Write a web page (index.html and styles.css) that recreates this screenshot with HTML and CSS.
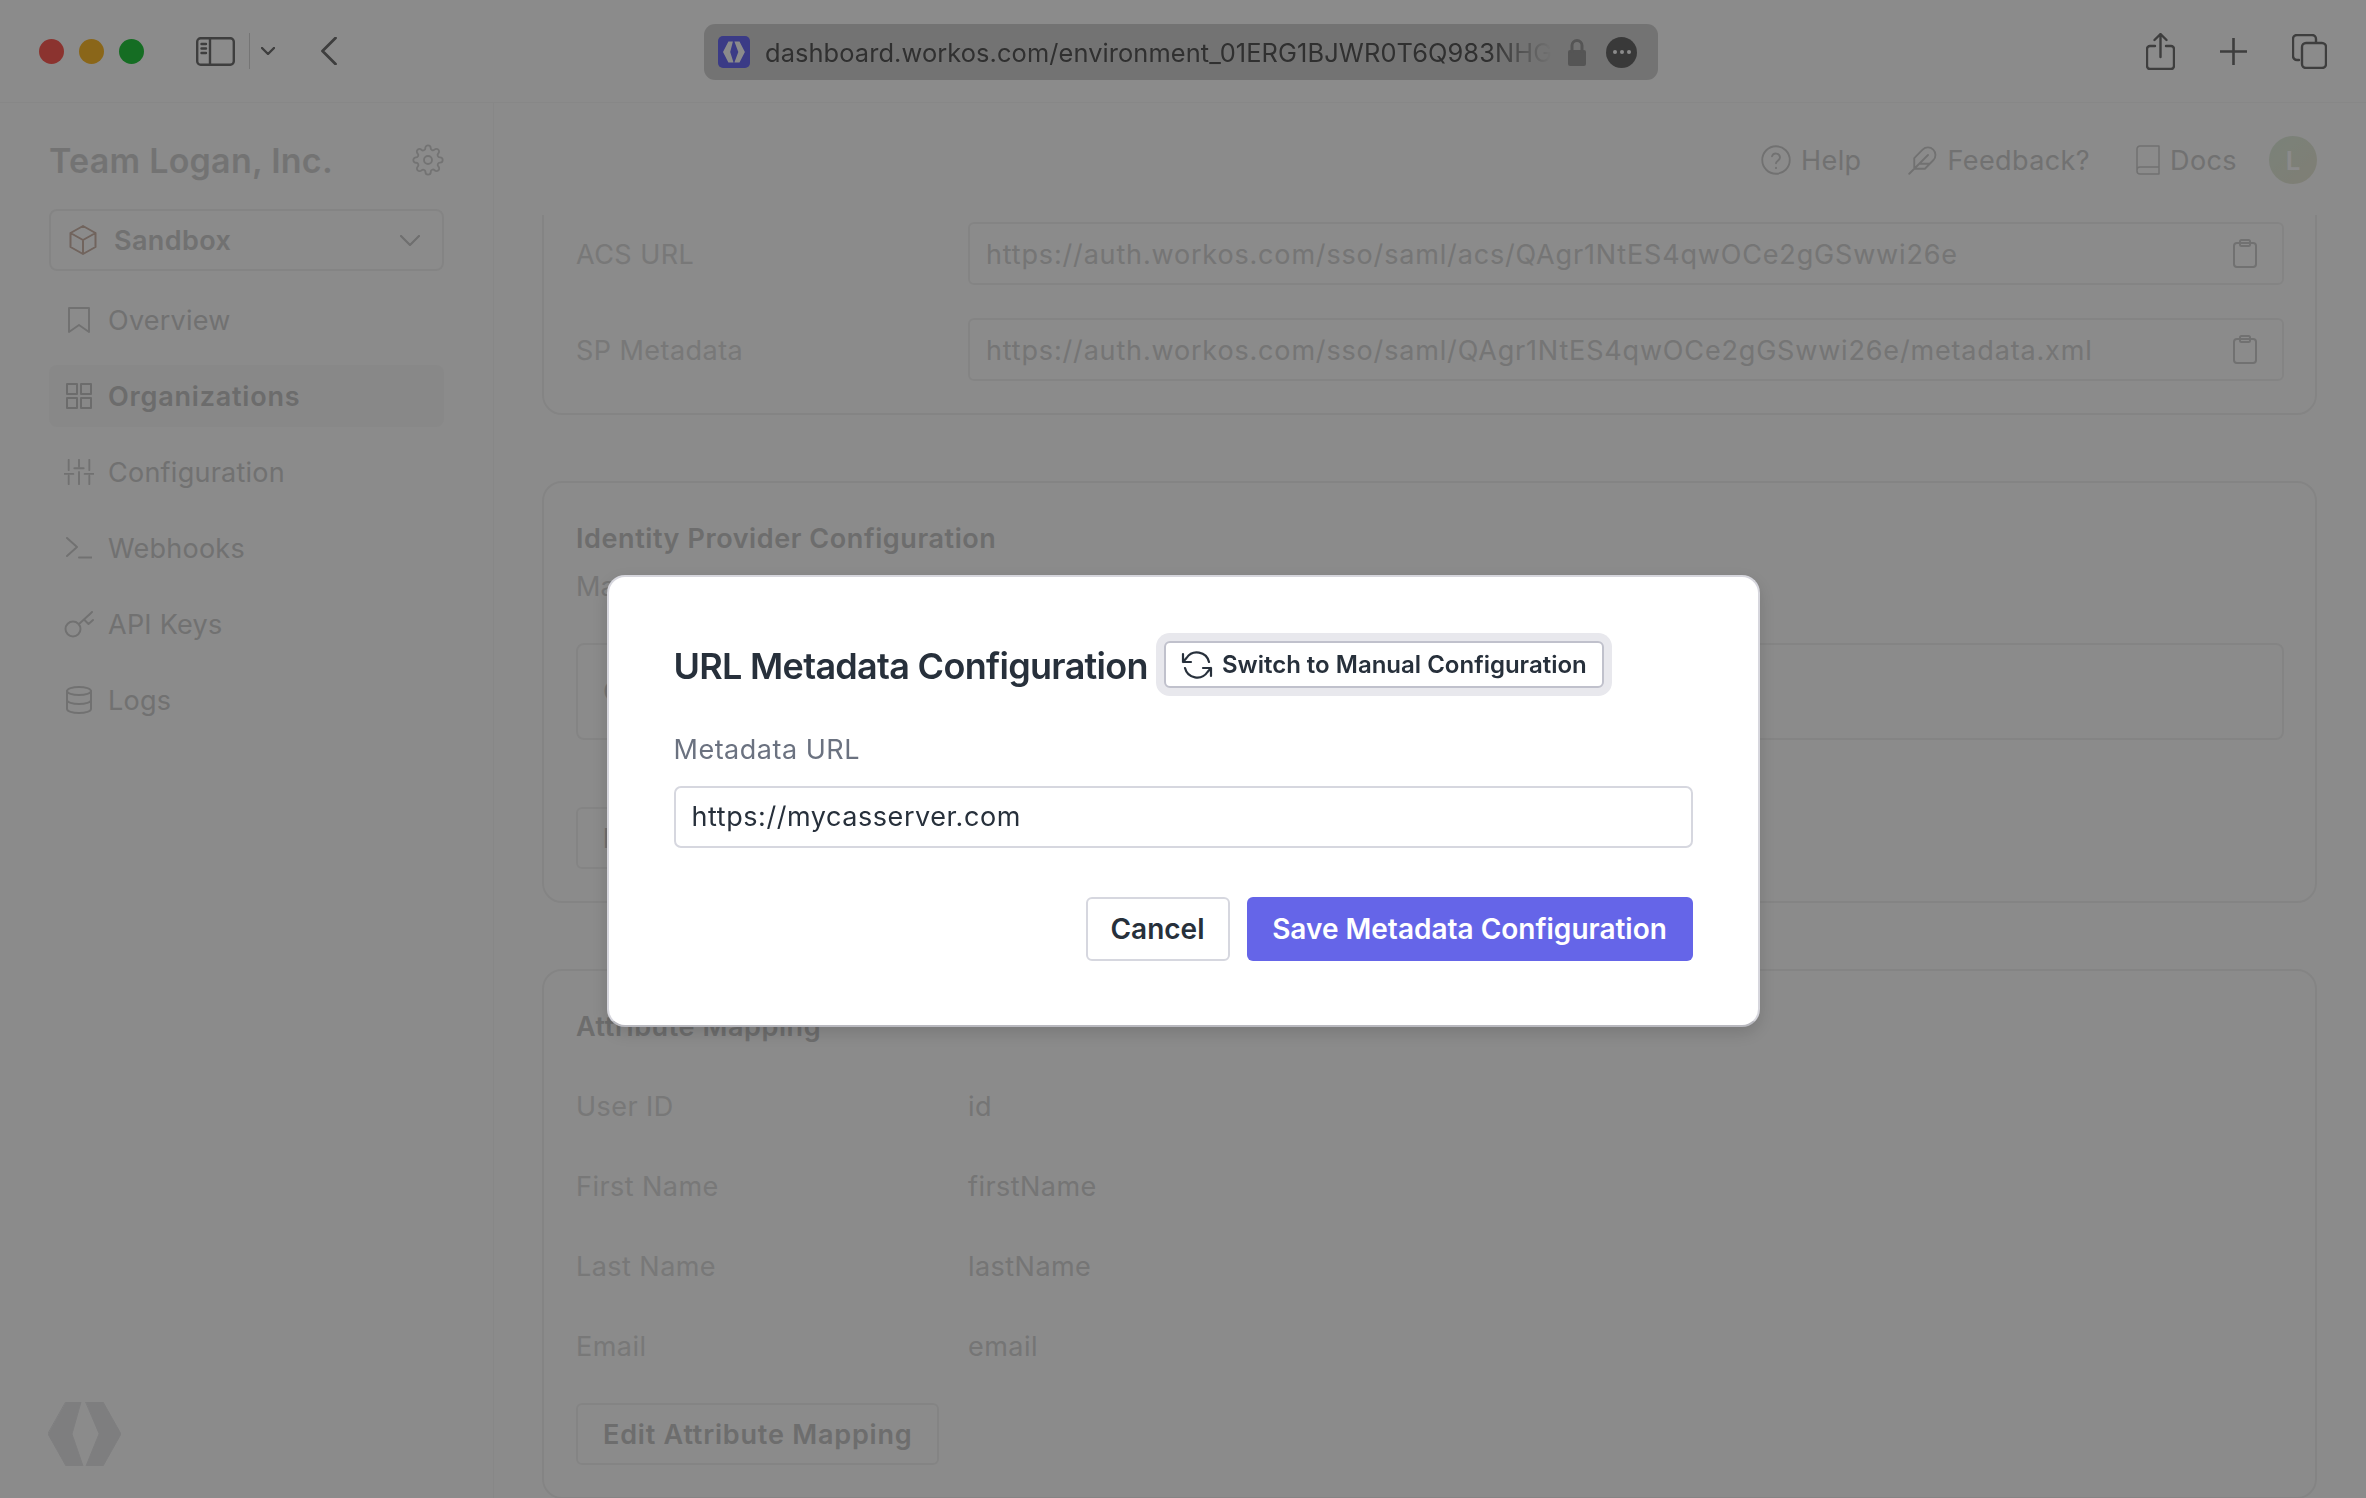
FILE: index.html
```html
<!DOCTYPE html>
<html lang="en">
<head>
    <meta charset="UTF-8">
    <meta name="viewport" content="width=device-width, initial-scale=1.0">
    <title>WorkOS Dashboard</title>
    <link rel="stylesheet" href="styles.css">
</head>
<body>
    <div class="window">
        <!-- Browser toolbar -->
        <header class="toolbar">
            <div class="toolbar-left">
                <div class="lights">
                    <span class="light light-red"></span>
                    <span class="light light-yellow"></span>
                    <span class="light light-green"></span>
                </div>
                <svg class="tb-sidebar" viewBox="0 0 39 29"><rect x="1.2" y="1.2" width="36.6" height="26.6" rx="3.5"/><path d="M14 1.2v26.6M5.5 7h4.5M5.5 11.5h4.5M5.5 16h4.5"/></svg>
                <span class="tb-divider"></span>
                <svg class="tb-caret" viewBox="0 0 14 8"><path d="M1 1l6 6 6-6"/></svg>
                <svg class="tb-back" viewBox="0 0 16 28"><path d="M14.5 1L1.5 14l13 13"/></svg>
            </div>
            <div class="urlbar">
                <svg class="favicon" viewBox="0 0 32 32">
                    <rect width="32" height="32" rx="5" class="favicon-bg"/>
                    <path class="favicon-mark" transform="translate(5 5.500) scale(0.3 0.33)" d="M18 0h15l-9 32 11 32H18L0 32zM38 0h17l18 32-18 32H38l13-32z"/>
                </svg>
                <span class="url-text">dashboard.workos.com/environment_01ERG1BJWR0T6Q983NHG</span>
                <svg class="url-lock" viewBox="0 0 18 27"><path class="lock-body" d="M2 11h14a2 2 0 0 1 2 2v12a2 2 0 0 1-2 2H2a2 2 0 0 1-2-2V13a2 2 0 0 1 2-2z"/><path class="lock-loop" d="M4 12V6.500a5 5 0 0 1 10 0V12"/></svg>
                <span class="url-more"><i></i><i></i><i></i></span>
            </div>
            <div class="toolbar-right">
                <svg class="tb-share" viewBox="0 0 29 37"><path d="M9 13H4a3 3 0 0 0-3 3v17a3 3 0 0 0 3 3h21a3 3 0 0 0 3-3V16a3 3 0 0 0-3-3h-5M14.500 24V1.500M8.500 7l6-6 6 6"/></svg>
                <svg class="tb-plus" viewBox="0 0 27 27"><path d="M13.500 0v27M0 13.500h27"/></svg>
                <svg class="tb-tabs" viewBox="0 0 35 35"><path d="M7 26H5a4 4 0 0 1-4-4V5a4 4 0 0 1 4-4h15a4 4 0 0 1 4 4v3"/><rect x="10" y="9" width="24" height="25" rx="4"/></svg>
            </div>
        </header>

        <div class="app">
            <!-- Sidebar -->
            <aside class="sidebar">
                <div class="brand">
                    <span class="brand-name">Team Logan, Inc.</span>
                    <svg class="brand-gear" viewBox="0 0 24 24"><circle cx="12" cy="12" r="3"/><path d="M19.4 15a1.65 1.65 0 0 0 .33 1.82l.06.06a2 2 0 0 1 0 2.83 2 2 0 0 1-2.83 0l-.06-.06a1.65 1.65 0 0 0-1.82-.33 1.65 1.65 0 0 0-1 1.51V21a2 2 0 0 1-2 2 2 2 0 0 1-2-2v-.09A1.65 1.65 0 0 0 9 19.4a1.65 1.65 0 0 0-1.82.33l-.06.06a2 2 0 0 1-2.83 0 2 2 0 0 1 0-2.83l.06-.06a1.65 1.65 0 0 0 .33-1.82 1.65 1.65 0 0 0-1.51-1H3a2 2 0 0 1-2-2 2 2 0 0 1 2-2h.09A1.65 1.65 0 0 0 4.600 9a1.65 1.65 0 0 0-.33-1.82l-.06-.06a2 2 0 0 1 0-2.83 2 2 0 0 1 2.83 0l.06.06a1.65 1.65 0 0 0 1.82.33H9a1.65 1.65 0 0 0 1-1.51V3a2 2 0 0 1 2-2 2 2 0 0 1 2 2v.09a1.65 1.65 0 0 0 1 1.51 1.65 1.65 0 0 0 1.82-.33l.06-.06a2 2 0 0 1 2.83 0 2 2 0 0 1 0 2.83l-.06.06a1.65 1.65 0 0 0-.33 1.82V9a1.65 1.65 0 0 0 1.51 1H21a2 2 0 0 1 2 2 2 2 0 0 1-2 2h-.09a1.65 1.65 0 0 0-1.51 1z"/></svg>
                </div>
                <div class="env-select">
                    <svg class="env-cube" viewBox="0 0 28 30"><path d="M14 1l12.500 7v14L14 29 1.500 22V8zM1.500 8L14 15l12.500-7M14 15v14"/></svg>
                    <span class="env-name">Sandbox</span>
                    <svg class="env-caret" viewBox="0 0 20 11"><path d="M1 1l9 9 9-9"/></svg>
                </div>
                <nav class="nav">
                    <a class="nav-item">
                        <span class="nav-icon"><svg viewBox="0 0 24 28" class="ic-bookmark"><path d="M2 2h20v24l-10-7-10 7z"/></svg></span>
                        Overview
                    </a>
                    <a class="nav-item active">
                        <span class="nav-icon"><svg viewBox="0 0 26 26" class="ic-grid"><rect x="1" y="1" width="10" height="10"/><rect x="15" y="1" width="10" height="10"/><rect x="1" y="15" width="10" height="10"/><rect x="15" y="15" width="10" height="10"/></svg></span>
                        Organizations
                    </a>
                    <a class="nav-item">
                        <span class="nav-icon"><svg viewBox="0 0 32 26" class="ic-sliders"><path d="M5 0v11M5 17v9M16 0v7M16 13v13M27 0v11M27 17v9M0 15h10M11 9h10M22 15h10"/></svg></span>
                        Configuration
                    </a>
                    <a class="nav-item">
                        <span class="nav-icon"><svg viewBox="0 0 26 22" class="ic-terminal"><path d="M1 1l10 9-10 9M13 20.500h13"/></svg></span>
                        Webhooks
                    </a>
                    <a class="nav-item">
                        <span class="nav-icon"><svg viewBox="0 0 30 28" class="ic-key"><circle cx="9" cy="19" r="7.500"/><path d="M15 14L27 3M20 9.500l4.500 4.500 4.500-4M25 5l3-3"/></svg></span>
                        API Keys
                    </a>
                    <a class="nav-item">
                        <span class="nav-icon"><svg viewBox="0 0 26 28" class="ic-db"><ellipse cx="13" cy="5" rx="12" ry="4"/><path d="M1 5v18c0 2.200 5.400 4 12 4s12-1.800 12-4V5M1 14c0 2.200 5.400 4 12 4s12-1.800 12-4"/></svg></span>
                        Logs
                    </a>
                </nav>
                <svg class="side-logo" viewBox="0 0 73 64"><path d="M18 0h15l-9 32 11 32H18L0 32zM38 0h17l18 32-18 32H38l13-32z"/></svg>
            </aside>

            <!-- Main area -->
            <main class="main">
                <div class="topnav">
                    <a class="topnav-link"><svg viewBox="0 0 24 24"><circle cx="12" cy="12" r="11"/><path d="M8.800 9a3.300 3.300 0 0 1 6.400 1c0 2.200-3.200 2.800-3.200 4.600M12 18.200v.3"/></svg>Help</a>
                    <a class="topnav-link"><svg viewBox="0 0 24 24"><path d="M20.200 12.200a6 6 0 0 0-8.500-8.500L5 10.500V19h8.500zM16 8L1 23M17.500 15H9"/></svg>Feedback?</a>
                    <a class="topnav-link"><svg viewBox="0 0 24 30" class="ic-book"><path d="M1 25V4a3 3 0 0 1 3-3h19v28H4a3 3 0 0 1-3-3v-1a3 3 0 0 1 3-3h19"/></svg>Docs</a>
                    <span class="avatar">L</span>
                </div>

                <div class="scroller">
                    <section class="card card-clipped">
                        <div class="copy-row">
                            <span class="field-label">ACS URL</span>
                            <div class="copy-input">
                                <span class="copy-text">https://auth.workos.com/sso/saml/acs/QAgr1NtES4qwOCe2gGSwwi26e</span>
                                <svg class="ic-clip" viewBox="0 0 24 29"><rect x="1" y="4" width="22" height="24" rx="3"/><rect x="7" y="1" width="10" height="6" rx="1.500"/></svg>
                            </div>
                        </div>
                        <div class="copy-row">
                            <span class="field-label">SP Metadata</span>
                            <div class="copy-input">
                                <span class="copy-text">https://auth.workos.com/sso/saml/QAgr1NtES4qwOCe2gGSwwi26e/metadata.xml</span>
                                <svg class="ic-clip" viewBox="0 0 24 29"><rect x="1" y="4" width="22" height="24" rx="3"/><rect x="7" y="1" width="10" height="6" rx="1.500"/></svg>
                            </div>
                        </div>
                    </section>

                    <section class="card">
                        <h2 class="card-title">Identity Provider Configuration</h2>
                        <p class="card-desc">Manual</p>
                        <div class="config-box">Cert</div>
                        <button class="ghost-btn ghost-btn-wide">Edit</button>
                    </section>

                    <section class="card">
                        <h2 class="card-title">Attribute Mapping</h2>
                        <div class="attr-list">
                            <div class="attr-row"><span class="field-label">User ID</span><span class="attr-value">id</span></div>
                            <div class="attr-row"><span class="field-label">First Name</span><span class="attr-value">firstName</span></div>
                            <div class="attr-row"><span class="field-label">Last Name</span><span class="attr-value">lastName</span></div>
                            <div class="attr-row"><span class="field-label">Email</span><span class="attr-value">email</span></div>
                        </div>
                        <button class="ghost-btn">Edit Attribute Mapping</button>
                    </section>
                </div>
            </main>
        </div>
    </div>

    <!-- Dialog -->
    <div class="overlay">
        <div class="modal">
            <div class="modal-head">
                <h1 class="modal-title">URL Metadata Configuration</h1>
                <button class="switch-btn">
                    <svg viewBox="0 0 32 28"><path d="M28 11A12.500 12.500 0 0 0 5.500 7L2 11M4 17a12.500 12.500 0 0 0 22.500 4l3.500-4M2 3v8h8M30 25v-8h-8"/></svg>
                    Switch to Manual Configuration
                </button>
            </div>
            <label class="modal-label" for="metadata-url">Metadata URL</label>
            <input class="modal-input" id="metadata-url" type="text" value="https://mycasserver.com">
            <div class="modal-actions">
                <button class="btn-cancel">Cancel</button>
                <button class="btn-save">Save Metadata Configuration</button>
            </div>
        </div>
    </div>
</body>
</html>
```

FILE: styles.css
```css
* {
    box-sizing: border-box;
}
html, body {
    margin: 0;
    height: 100%;
    overflow: hidden;
}
body {
    font-family: Inter, "Liberation Sans", sans-serif;
    background-color: #fff;
}
svg {
    display: block;
    fill: none;
    stroke: currentColor;
    stroke-width: 2;
    stroke-linecap: round;
    stroke-linejoin: round;
}
.window {
    height: 100vh;
    display: flex;
    flex-direction: column;
}

/* toolbar */
.toolbar {
    height: 103px;
    flex: none;
    position: relative;
    display: flex;
    align-items: center;
    justify-content: space-between;
    padding: 0 39px 0 39px;
    border-bottom: 1px solid #f8f8f8;
    color: #727272;
}
.toolbar-left, .toolbar-right {
    display: flex;
    align-items: center;
}
.lights {
    display: flex;
    gap: 15px;
    margin-right: 52px;
}
.light {
    width: 25px;
    height: 25px;
    border-radius: 50%;
}
.light-red { background-color: #ff5f57; }
.light-yellow { background-color: #febc2e; }
.light-green { background-color: #28c840; }
.tb-sidebar { width: 39px; height: 29px; stroke-width: 2.400; }
.tb-divider {
    width: 1px;
    height: 36px;
    background-color: #d6d6d6;
    margin: 0 11px 0 14px;
}
.tb-caret { width: 14px; height: 8px; stroke-width: 2.400; }
.tb-back { width: 16px; height: 28px; margin-left: 46px; stroke-width: 2.800; }
.urlbar {
    position: absolute;
    left: 704px;
    top: 24px;
    width: 954px;
    height: 56px;
    border-radius: 11px;
    background-color: #d4d4d4;
    display: flex;
    align-items: center;
    padding-left: 14px;
}
.favicon { width: 32px; height: 32px; stroke: none; flex: none; }
.favicon-bg { fill: #6c6cf6; }
.favicon-mark { fill: #fff; }
.url-text {
    width: 787px;
    margin-left: 15px;
    white-space: nowrap;
    font-size: 25.400px;
    letter-spacing: 0.1px;
    color: #585858;
    -webkit-mask-image: linear-gradient(to right, #000 92%, transparent 100%);
    mask-image: linear-gradient(to right, #000 92%, transparent 100%);
}
.url-lock { width: 18px; height: 27px; margin-left: 16px; flex: none; stroke: none; }
.lock-body { fill: #9c9c9c; }
.lock-loop { stroke: #9c9c9c; stroke-width: 3; }
.url-more {
    width: 31px;
    height: 31px;
    margin-left: 20px;
    border-radius: 50%;
    background-color: #6a6a6a;
    display: flex;
    align-items: center;
    justify-content: center;
    gap: 3px;
    flex: none;
}
.url-more i {
    width: 4px;
    height: 4px;
    border-radius: 50%;
    background-color: #fff;
}
.toolbar-right { gap: 45px; }
.tb-share { width: 29px; height: 37px; stroke-width: 2.400; }
.tb-plus { width: 27px; height: 27px; stroke-width: 2.600; }
.tb-tabs { width: 35px; height: 35px; stroke-width: 2.400; }

/* app */
.app {
    flex: 1;
    display: flex;
    min-height: 0;
}
.sidebar {
    width: 494px;
    flex: none;
    border-right: 1px solid #f8f8f8;
    padding: 0 49px;
    position: relative;
    color: #cbcbcb;
}
.brand {
    height: 106px;
    padding-top: 8px;
    display: flex;
    align-items: center;
    justify-content: space-between;
}
.brand-name {
    font-size: 34px;
    font-weight: 600;
    letter-spacing: 0.25px;
    color: #d4d4d4;
}
.brand-gear { width: 32px; height: 32px; stroke-width: 1.400; color: #d4d4d4; }
.env-select {
    height: 62px;
    border: 2px solid #f3f3f3;
    border-radius: 8px;
    display: flex;
    align-items: center;
    padding: 0 22px 0 18px;
    margin-bottom: 18px;
}
.env-cube { width: 28px; height: 30px; color: #cfb7ab; stroke-width: 2; }
.env-name {
    font-size: 27px;
    font-weight: 600;
    letter-spacing: 0.4px;
    margin-left: 17px;
    flex: 1;
    color: #cfcfcf;
}
.env-caret { width: 20px; height: 11px; stroke-width: 2.200; }
.nav {
    display: flex;
    flex-direction: column;
    gap: 14px;
}
.nav-item {
    height: 62px;
    display: flex;
    align-items: center;
    gap: 14px;
    padding: 0 15px;
    border-radius: 8px;
    font-size: 27px;
    letter-spacing: 0.25px;
    color: #d0d0d0;
}
.nav-item.active {
    background-color: #fafafa;
    font-weight: 600;
    letter-spacing: 0.8px;
    color: #c6c6c6;
}
.nav-icon {
    width: 30px;
    display: flex;
    justify-content: center;
    flex: none;
}
.ic-bookmark { width: 24px; height: 28px; }
.ic-grid { width: 26px; height: 26px; }
.ic-sliders { width: 32px; height: 26px; }
.ic-terminal { width: 26px; height: 22px; }
.ic-key { width: 30px; height: 28px; }
.ic-db { width: 26px; height: 28px; }
.side-logo {
    position: absolute;
    left: 48px;
    bottom: 32px;
    width: 73px;
    height: 64px;
    fill: #e8e8ea;
    stroke: #e8e8ea;
    stroke-width: 1;
}

/* main */
.main {
    flex: 1;
    display: flex;
    flex-direction: column;
    min-width: 0;
    padding: 0 49px 0 48px;
}
.topnav {
    height: 112px;
    flex: none;
    display: flex;
    align-items: flex-start;
    justify-content: flex-end;
    padding-top: 33px;
    gap: 46px;
    color: #d0d0d0;
}
.topnav-link {
    display: flex;
    align-items: center;
    gap: 10px;
    height: 48px;
    font-size: 27px;
    letter-spacing: 0.4px;
}
.topnav-link svg {
    width: 30px;
    height: 30px;
    stroke-width: 1.500;
}
.topnav-link svg.ic-book {
    width: 24px;
}
.avatar {
    width: 48px;
    height: 48px;
    border-radius: 50%;
    margin-left: -14px;
    background: linear-gradient(135deg, #e0eedf, #eae8d6);
    color: #fff;
    display: flex;
    align-items: center;
    justify-content: center;
    font-size: 26px;
    font-weight: 600;
}
.scroller {
    flex: 1;
    min-height: 0;
    overflow: hidden;
    display: flex;
    flex-direction: column;
    gap: 66px;
}
.card {
    flex: none;
    border: 2px solid #f3f3f3;
    border-radius: 20px;
    padding: 38px 31px 32px 32px;
}
.card-clipped {
    margin-top: -40px;
    padding-top: 45px;
    display: flex;
    flex-direction: column;
    gap: 33px;
}
.copy-row {
    display: flex;
    align-items: center;
}
.field-label {
    width: 392px;
    flex: none;
    padding-top: 2px;
    font-size: 27px;
    line-height: 32px;
    letter-spacing: 0.45px;
    color: #dcdcdc;
}
.copy-input {
    flex: 1;
    height: 63px;
    border: 2px solid #f3f3f3;
    border-radius: 6px;
    display: flex;
    align-items: center;
    justify-content: space-between;
    padding: 0 25px 0 16px;
    font-size: 27px;
    letter-spacing: 0.83px;
    color: #d6d6d6;
}
.copy-text {
    padding-top: 2px;
}
.ic-clip { width: 24px; height: 29px; color: #cfcfcf; stroke-width: 2; }
.card-title {
    margin: 0;
    padding-top: 2px;
    font-size: 27px;
    line-height: 32px;
    font-weight: 600;
    letter-spacing: 0.58px;
    color: #c8c8c8;
}
.card-desc {
    margin: 14px 0 40px;
    padding-top: 2px;
    font-size: 27px;
    line-height: 32px;
    color: #d6d6d6;
}
.config-box {
    height: 97px;
    border: 2px solid #f3f3f3;
    border-radius: 8px;
    display: flex;
    align-items: center;
    padding-left: 25px;
    margin-bottom: 67px;
    font-size: 27px;
    color: #d0d0d0;
}
.ghost-btn {
    display: block;
    height: 62px;
    padding: 0 25px;
    background: #fff;
    border: 2px solid #f3f3f3;
    border-radius: 6px;
    font-family: inherit;
    font-size: 27px;
    font-weight: 600;
    letter-spacing: 0.8px;
    color: #c8c8c8;
}
.ghost-btn-wide {
    width: 240px;
    text-align: left;
}
.attr-list {
    display: flex;
    flex-direction: column;
    gap: 46px;
    margin: 46px 0 40px;
}
.attr-row {
    display: flex;
}
.attr-value {
    padding-top: 2px;
    font-size: 27px;
    line-height: 32px;
    letter-spacing: 0.45px;
    color: #d6d6d6;
}

/* dialog */
.overlay {
    position: fixed;
    inset: 0;
    padding-top: 103px;
    background-color: rgba(0, 0, 0, 0.455);
    display: flex;
    align-items: center;
    justify-content: center;
}
.modal {
    width: 1153px;
    background: #fff;
    border: 2px solid #d6d6dd;
    border-bottom-color: #b9b9bf;
    border-radius: 18px;
    padding: 64px 65px;
    box-shadow: 0 6px 18px rgba(0, 0, 0, 0.15);
}
.modal-head {
    display: flex;
    align-items: center;
    gap: 16px;
    height: 48px;
}
.modal-title {
    margin: 0;
    padding-top: 2px;
    font-size: 36px;
    font-weight: 600;
    letter-spacing: -0.7px;
    white-space: nowrap;
    color: #27303b;
}
.switch-btn {
    height: 47px;
    width: 440px;
    display: flex;
    align-items: center;
    gap: 9px;
    padding: 0 0 0 15px;
    background: #fff;
    border: 2px solid #c0c1cc;
    border-radius: 6px;
    box-shadow: 0 0 0 8px #e8e8ed;
    font-family: inherit;
    font-size: 24px;
    font-weight: 600;
    color: #27303b;
    white-space: nowrap;
}
.switch-btn svg {
    width: 32px;
    height: 28px;
    stroke-width: 2.200;
}
.modal-label {
    display: block;
    margin: 45px 0 20px;
    font-size: 27px;
    line-height: 32px;
    letter-spacing: 0.5px;
    color: #6b7280;
}
.modal-input {
    display: block;
    width: 100%;
    height: 62px;
    padding: 0 16px;
    border: 2px solid #d6d7df;
    border-radius: 7px;
    outline: none;
    font-family: inherit;
    font-size: 27px;
    letter-spacing: 0.56px;
    color: #27303b;
}
.modal-actions {
    display: flex;
    justify-content: flex-end;
    gap: 17px;
    margin-top: 49px;
}
.btn-cancel, .btn-save {
    height: 64px;
    border-radius: 6px;
    font-family: inherit;
    font-size: 28px;
    font-weight: 600;
}
.btn-cancel {
    width: 144px;
    background: #fff;
    border: 2px solid #d6d7df;
    color: #27303b;
}
.btn-save {
    width: 446px;
    background-color: #6565e8;
    border: none;
    color: #fff;
}
```
